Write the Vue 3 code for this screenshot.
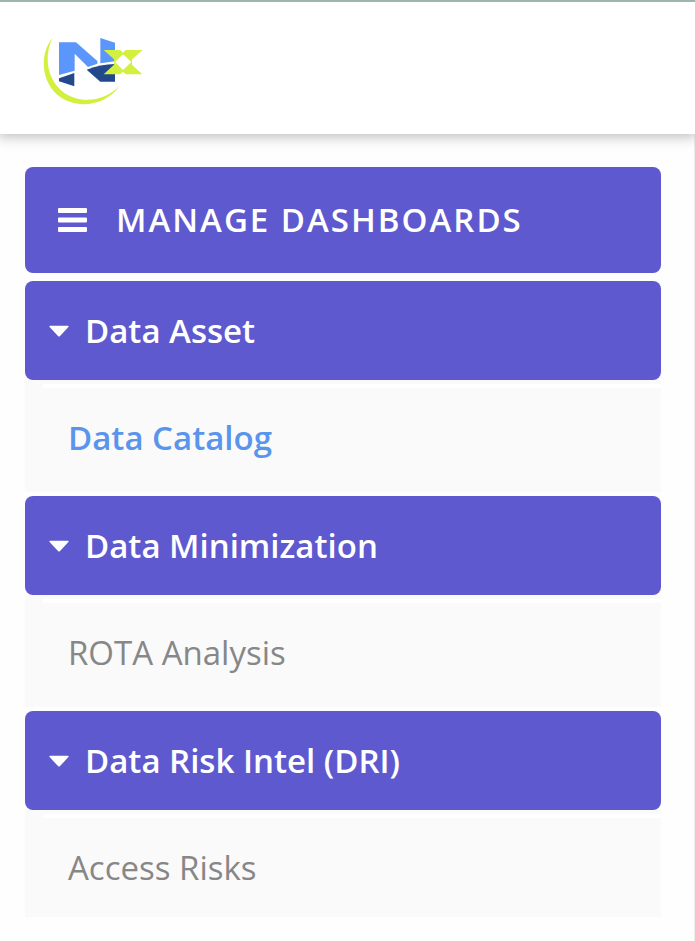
<script setup>
import { ref } from 'vue'

const sections = ref([
  { id: 'asset', title: 'Data Asset', open: true, items: [{ label: 'Data Catalog', active: true }] },
  { id: 'minimization', title: 'Data Minimization', open: true, items: [{ label: 'ROTA Analysis', active: false }] },
  { id: 'risk', title: 'Data Risk Intel (DRI)', open: true, items: [{ label: 'Access Risks', active: false }] },
])
</script>

<template>
  <div class="page">
    <header class="header">
      <a class="brand" href="#" aria-label="Home">
        <svg class="logo" viewBox="36 30 312 216" aria-hidden="true">
          <path d="M67 39 C28 88 34 165 80 208 C130 253 224 248 269 182 C222 231 145 239 95 197 C50 159 42 94 67 39Z" fill="#d3f03f" />
          <path d="M87 52 H138 L202 108 V116 L174 126 L134 86 V137 L87 150Z" fill="#5a96fb" />
          <path d="M211 39 L255 53 V109 L211 115Z" fill="#5a96fb" />
          <path d="M87 160 L133 144 V184 L87 169Z" fill="#23498c" />
          <path d="M170 134 Q212 118 255 117 V170 H211Z" fill="#23498c" />
          <path d="M221 75 H271 L279 83 L287 75 H338 L306 103 V119 L337 148 H288 L279 140 L270 148 H221 L252 119 V103Z" fill="#d3f03f" />
          <path d="M279 88 L304 111 L279 135 L255 111Z" fill="#fff" />
        </svg>
      </a>
    </header>

    <nav class="sidebar" aria-label="Dashboards">
      <button class="manage" type="button">
        <svg class="menu-icon" viewBox="0 0 29 24" aria-hidden="true">
          <rect width="29" height="5" rx="1" />
          <rect y="9.5" width="29" height="5" rx="1" />
          <rect y="19" width="29" height="5" rx="1" />
        </svg>
        <span>MANAGE DASHBOARDS</span>
      </button>

      <section v-for="section in sections" :key="section.id" class="group">
        <button
          class="group-title"
          type="button"
          :aria-expanded="section.open"
          :aria-controls="section.id"
          @click="section.open = !section.open"
        >
          <svg class="caret" viewBox="0 0 20 12" aria-hidden="true">
            <path d="M1.2 0.8 H18.8 Q20.2 1.1 19.2 2.3 L11 11.1 Q10 12.1 9 11.1 L0.8 2.3 Q-0.2 1.1 1.2 0.8Z" />
          </svg>
          <span>{{ section.title }}</span>
        </button>
        <ul v-show="section.open" :id="section.id" class="items">
          <li v-for="item in section.items" :key="item.label">
            <a href="#" class="item" :class="{ active: item.active }">{{ item.label }}</a>
          </li>
        </ul>
      </section>
    </nav>
  </div>
</template>

<style>
body {
  background: #fefefe;
}
</style>

<style scoped>
.page {
  display: flex;
  flex-direction: column;
  min-height: 100vh;
  box-sizing: border-box;
  font-family: "Open Sans", "Noto Sans", sans-serif;
  font-size: 33px;
  line-height: 46px;
}

.header {
  position: relative;
  padding: 33px 42px 27px;
  border-top: 2px solid #9db5b0;
  background: #fff;
  box-shadow: 0 1px 12px 2px rgba(0, 0, 0, 0.25);
}

.brand {
  display: block;
  width: 104px;
}

.logo {
  display: block;
  width: 104px;
  height: 72px;
}

.sidebar {
  display: flex;
  flex: 1;
  flex-direction: column;
  padding: 33px 33px 24px 25px;
  border-right: 1px solid #ececec;
}

.manage,
.group-title {
  display: flex;
  align-items: center;
  width: 100%;
  border: 0;
  border-radius: 8px;
  background: #5e59cf;
  color: #fff;
  font: inherit;
  font-weight: 600;
  text-align: left;
  cursor: pointer;
}

.manage {
  gap: 29px;
  margin-bottom: 8px;
  padding: 30px 33px;
  letter-spacing: 2px;
}

.menu-icon {
  width: 29px;
  height: 24px;
  fill: #fff;
}

.group-title {
  gap: 16px;
  padding: 27px 24px 26px;
}

.caret {
  width: 20px;
  height: 12px;
  fill: #fff;
}

.group + .group {
  margin-top: 4px;
}

.items {
  margin: 0;
  padding: 4px 0 0;
  background: #fafafa;
  list-style: none;
}

.items::before {
  content: "";
  display: block;
  height: 4px;
  margin-left: 18px;
  background: #fff;
}

.item {
  display: block;
  padding: 27px 43px 31px;
  color: #878787;
  text-decoration: none;
}

.group:last-child .item {
  padding-bottom: 26px;
}

.item.active {
  color: #5995ec;
  font-weight: 600;
}
</style>
